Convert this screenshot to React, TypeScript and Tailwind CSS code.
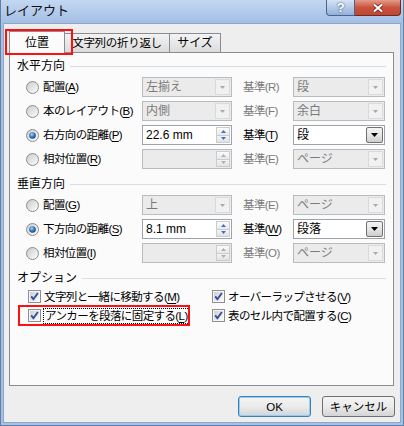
import { useId } from "react";
import type { ReactNode } from "react";

const FONT = "font-['Liberation_Sans','Noto_Sans_CJK_JP',sans-serif]";

function uid() {
  return useId().replace(/[^a-zA-Z0-9]/g, "");
}

function Radio({ checked }: { checked?: boolean }) {
  const id = uid();
  return (
    <svg width="13" height="13" viewBox="0 0 13 13" className="shrink-0">
      <defs>
        <linearGradient id={id + "b"} x1="0" y1="0" x2="1" y2="1">
          <stop offset="0" stopColor="#c9c9c9" />
          <stop offset="1" stopColor="#ffffff" />
        </linearGradient>
        <radialGradient id={id + "d"} cx="0.4" cy="0.35" r="0.7">
          <stop offset="0" stopColor="#b5dcf7" />
          <stop offset="0.45" stopColor="#3d84cf" />
          <stop offset="1" stopColor="#1a3c74" />
        </radialGradient>
      </defs>
      <circle cx="6.5" cy="6.5" r="6" fill={`url(#${id}b)`} stroke="#8d8d8d" />
      {checked && <circle cx="6.5" cy="6.5" r="3.3" fill={`url(#${id}d)`} />}
    </svg>
  );
}

function Check() {
  const id = uid();
  return (
    <svg width="13" height="13" viewBox="0 0 13 13" className="shrink-0">
      <defs>
        <linearGradient id={id} x1="0" y1="0" x2="1" y2="1">
          <stop offset="0" stopColor="#cfcfcf" />
          <stop offset="1" stopColor="#fbfbfb" />
        </linearGradient>
      </defs>
      <rect x="0.5" y="0.5" width="12" height="12" fill="#f6f6f6" stroke="#8e8f8f" />
      <rect x="2" y="2" width="9" height="9" fill={`url(#${id})`} />
      <path d="M3.2 6.4 5.4 9.2 9.9 3" fill="none" stroke="#2f4f9c" strokeWidth="1.9" />
    </svg>
  );
}

function Arrow({ color }: { color: string }) {
  return (
    <svg width="7" height="4" viewBox="0 0 7 4">
      <path d="M0 0h7L3.5 4z" fill={color} />
    </svg>
  );
}

function DropBtn({ disabled }: { disabled?: boolean }) {
  if (disabled)
    return (
      <div className="m-px flex w-[15px] items-center justify-center border border-[#dadada] bg-[#f1f1f1]">
        <svg width="5" height="3" viewBox="0 0 5 3">
          <path d="M0 0h5L2.5 3z" fill="#a9a9a9" />
        </svg>
      </div>
    );
  return (
    <div className="m-px flex w-[17px] items-center justify-center rounded-[2px] border border-[#707070] bg-gradient-to-b from-[#f3f3f3] via-[#e6e6e6] to-[#cdcdcd]">
      <Arrow color="#000" />
    </div>
  );
}

function Combo({ value, disabled, w }: { value?: string; disabled?: boolean; w: string }) {
  return (
    <div
      className={`flex h-[20px] ${w} border ${
        disabled ? "border-[#b9bcbf] bg-[#ebebeb] text-[#7a7a7a]" : "border-[#9da3ab] bg-white text-black"
      }`}
    >
      <span className="flex-1 truncate pl-[3px] text-[12px] leading-[18px] tracking-normal">{value}</span>
      <DropBtn disabled={disabled} />
    </div>
  );
}

function Spin({ value, disabled }: { value?: string; disabled?: boolean }) {
  const c = disabled ? "#b0b0b0" : "#3f73b8";
  return (
    <div
      className={`flex h-[20px] w-[90px] border ${
        disabled ? "border-[#b9bcbf] bg-[#ebebeb]" : "border-[#9da3ab] bg-white"
      }`}
    >
      <span className="flex-1 pl-[3px] text-[12px] leading-[18px] tracking-normal text-black">{value}</span>
      <div className="m-px flex w-[14px] flex-col border border-[#c9cdd2]">
        <div className="flex flex-1 items-center justify-center border-b border-[#c9cdd2] bg-gradient-to-b from-[#fbfbfb] to-[#e8e8e8]">
          <svg width="5" height="3" viewBox="0 0 5 3">
            <path d="M0 3h5L2.5 0z" fill={c} />
          </svg>
        </div>
        <div className="flex flex-1 items-center justify-center bg-gradient-to-b from-[#f4f4f4] to-[#e2e2e2]">
          <svg width="5" height="3" viewBox="0 0 5 3">
            <path d="M0 0h5L2.5 3z" fill={c} />
          </svg>
        </div>
      </div>
    </div>
  );
}

function Header({ children }: { children: ReactNode }) {
  return (
    <div className="flex h-[18px] items-center px-[7px]">
      <span className="whitespace-nowrap text-[12px] leading-[14px] tracking-normal">{children}</span>
      <div className="ml-[5px] h-px flex-1 bg-[#d5dfe5]" />
    </div>
  );
}

interface RowDef {
  label: string;
  key: string;
  checked?: boolean;
  left: ReactNode;
  refKey: string;
  refOn?: boolean;
  right: ReactNode;
}

function Row({ r }: { r: RowDef }) {
  return (
    <div className="flex h-[24px] items-center pl-[16px]">
      <Radio checked={r.checked} />
      <span className="ml-[4px] w-[99px] whitespace-nowrap leading-[14px]">
        {r.label}(<u className="underline-offset-2">{r.key}</u>)
      </span>
      {r.left}
      <span
        className={`ml-[11px] w-[50px] whitespace-nowrap leading-[14px] ${r.refOn ? "text-black" : "text-[#7a7a7a]"}`}
      >
        基準({r.refOn ? <u className="underline-offset-2">{r.refKey}</u> : r.refKey})
      </span>
      {r.right}
    </div>
  );
}

const L = "w-[90px]";
const R = "w-[92px]";

const horizontal: RowDef[] = [
  { label: "配置", key: "A", left: <Combo value="左揃え" disabled w={L} />, refKey: "R", right: <Combo value="段" disabled w={R} /> },
  { label: "本のレイアウト", key: "B", left: <Combo value="内側" disabled w={L} />, refKey: "F", right: <Combo value="余白" disabled w={R} /> },
  { label: "右方向の距離", key: "P", checked: true, left: <Spin value="22.6 mm" />, refKey: "T", refOn: true, right: <Combo value="段" w={R} /> },
  { label: "相対位置", key: "R", left: <Spin disabled />, refKey: "E", right: <Combo value="ページ" disabled w={R} /> },
];

const vertical: RowDef[] = [
  { label: "配置", key: "G", left: <Combo value="上" disabled w={L} />, refKey: "E", right: <Combo value="ページ" disabled w={R} /> },
  { label: "下方向の距離", key: "S", checked: true, left: <Spin value="8.1 mm" />, refKey: "W", refOn: true, right: <Combo value="段落" w={R} /> },
  { label: "相対位置", key: "I", left: <Spin disabled />, refKey: "O", right: <Combo value="ページ" disabled w={R} /> },
];

function Button({ children, focused }: { children: ReactNode; focused?: boolean }) {
  return (
    <button
      className={`flex h-[21px] w-[73px] items-center justify-center rounded-[3px] border bg-gradient-to-b from-[#f4f4f4] via-[#ebebeb] to-[#d4d4d4] leading-[14px] ${
        focused ? "border-[#3c7fb1] shadow-[inset_0_0_0_1px_#8fd0f6]" : "border-[#707070]"
      }`}
    >
      {children}
    </button>
  );
}

export default function App() {
  return (
    <div
      className={`flex h-[426px] w-[404px] flex-col overflow-hidden border-x border-b border-[#5f7fab] bg-[#a7c1e5] text-[11.5px] tracking-[-0.6px] text-black ${FONT}`}
    >
      {/* title bar */}
      <div className="flex h-[23px] shrink-0 items-start justify-between bg-gradient-to-b from-[#c3d7f1] to-[#a4bfe5]">
        <span className="pl-[3px] pt-[3px] text-[13px] leading-[16px] tracking-normal text-[#111]">レイアウト</span>
        <div className="mr-[2px] flex h-[16px]">
          <div className="flex w-[29px] items-center justify-center rounded-bl-[4px] border border-t-0 border-[#48638c] bg-gradient-to-b from-[#d5e3f5] to-[#94b1da]">
            <span className="text-[13px] font-bold leading-[14px] text-white [text-shadow:0_0_2px_#1d3557]">?</span>
          </div>
          <div className="flex w-[46px] items-center justify-center rounded-br-[4px] border border-l-0 border-t-0 border-[#6b2a22] bg-gradient-to-b from-[#e39a8a] via-[#c9533d] to-[#c0462f]">
            <svg width="12" height="10" viewBox="0 0 12 10">
              <path d="M2 1.5 10 8.5M10 1.5 2 8.5" stroke="#5b1d14" strokeWidth="3.6" />
              <path d="M2 1.5 10 8.5M10 1.5 2 8.5" stroke="#fff" strokeWidth="2.2" />
            </svg>
          </div>
        </div>
      </div>

      {/* dialog body */}
      <div className="mx-[2px] mb-[2px] flex flex-1 flex-col border border-[#8ea6c8] bg-[#eeeeee]">
        <div className="ml-[5px] mt-[7px] flex h-[21px] items-end text-[12px] tracking-normal">
          <div className="relative z-10 -mb-px flex h-[22px] w-[56px] items-center justify-center border border-b-0 border-[#898c95] bg-[#fbfbfb]">
            <span className="leading-[14px]">位置</span>
            <div className="absolute -left-[5px] -top-[3px] h-[26px] w-[68px] border-2 border-[#ff1010]" />
          </div>
          <div className="flex h-[19px] w-[105px] items-center justify-center border border-b-0 border-l-0 border-[#898c95] bg-gradient-to-b from-[#f3f3f3] to-[#dcdcdc]">
            <span className="whitespace-nowrap text-[11.5px] leading-[14px] tracking-[-0.3px]">文字列の折り返し</span>
          </div>
          <div className="flex h-[19px] w-[51px] items-center justify-center border border-b-0 border-l-0 border-[#898c95] bg-gradient-to-b from-[#f3f3f3] to-[#dcdcdc]">
            <span className="leading-[14px]">サイズ</span>
          </div>
        </div>

        <div className="ml-[5px] h-[334px] w-[385px] border border-[#898c95] bg-[#fbfbfb] pt-[4px]">
          <Header>水平方向</Header>
          {horizontal.map((r) => (
            <Row key={r.key} r={r} />
          ))}
          <div className="mt-[4px]">
            <Header>垂直方向</Header>
          </div>
          {vertical.map((r) => (
            <Row key={r.key} r={r} />
          ))}
          <div className="mt-[4px]">
            <Header>オプション</Header>
          </div>
          <div className="grid grid-cols-[202px_1fr]">
            <div className="flex h-[19px] items-center pl-[18px]">
              <Check />
              <span className="ml-[3px] whitespace-nowrap leading-[14px]">
                文字列と一緒に移動する(<u className="underline-offset-2">M</u>)
              </span>
            </div>
            <div className="flex h-[19px] items-center">
              <Check />
              <span className="ml-[3px] whitespace-nowrap leading-[14px]">
                オーバーラップさせる(<u className="underline-offset-2">V</u>)
              </span>
            </div>
            <div className="relative flex h-[19px] items-center pl-[18px]">
              <Check />
              <span className="ml-[2px] whitespace-nowrap border border-dotted border-black px-px leading-[14px]">
                アンカーを段落に固定する(<u className="underline-offset-2">L</u>)
              </span>
              <div className="absolute left-[8px] -top-px h-[21px] w-[172px] border-2 border-[#ff1010]" />
            </div>
            <div className="flex h-[19px] items-center">
              <Check />
              <span className="ml-[3px] whitespace-nowrap leading-[14px]">
                表のセル内で配置する(<u className="underline-offset-2">C</u>)
              </span>
            </div>
          </div>
        </div>

        <div className="mr-[5px] mt-[10px] flex justify-end gap-[11px] tracking-normal">
          <Button focused>OK</Button>
          <Button>キャンセル</Button>
        </div>
      </div>
    </div>
  );
}
